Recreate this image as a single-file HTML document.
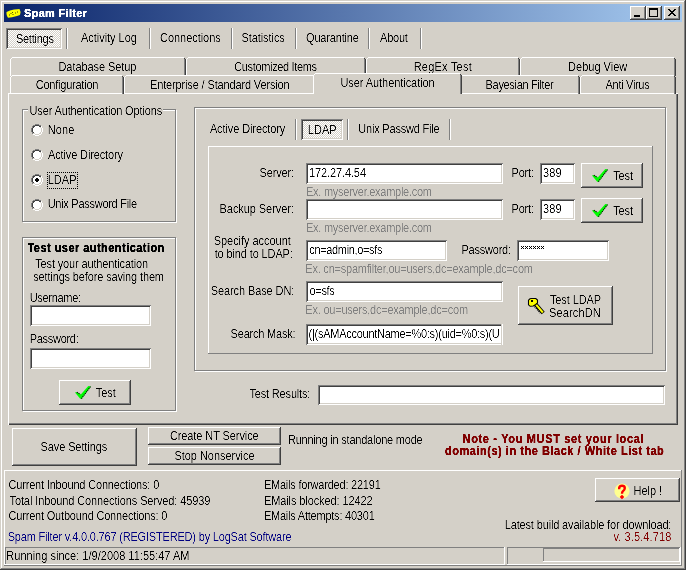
<!DOCTYPE html>
<html><head><meta charset="utf-8"><style>
html,body{margin:0;padding:0;width:686px;height:570px;overflow:hidden;background:#d4d0c8}
body{position:relative;font-family:"Liberation Sans", sans-serif;font-size:11px;color:#000}
body div, body svg{position:absolute}
.t{white-space:pre;line-height:13px;font-size:11px;filter:url(#crisp)}
</style></head><body>
<svg width="0" height="0" style="position:absolute;left:0;top:0"><filter id="crisp" x="-5%" y="-30%" width="110%" height="160%"><feComponentTransfer><feFuncA type="linear" slope="2" intercept="-0.6"/></feComponentTransfer></filter><filter id="crispb" x="-5%" y="-30%" width="110%" height="160%"><feComponentTransfer><feFuncA type="linear" slope="2.5" intercept="-0.2"/></feComponentTransfer></filter></svg>
<div style="left:0px;top:0px;width:686px;height:1px;background:#d4d0c8"></div>
<div style="left:0px;top:0px;width:1px;height:570px;background:#d4d0c8"></div>
<div style="left:1px;top:1px;width:684px;height:1px;background:#fff"></div>
<div style="left:1px;top:1px;width:1px;height:568px;background:#fff"></div>
<div style="left:0px;top:569px;width:686px;height:1px;background:#404040"></div>
<div style="left:685px;top:0px;width:1px;height:570px;background:#404040"></div>
<div style="left:1px;top:568px;width:684px;height:1px;background:#808080"></div>
<div style="left:684px;top:1px;width:1px;height:568px;background:#808080"></div>
<div style="left:4px;top:4px;width:678px;height:18px;background:linear-gradient(to right,#0a246a,#a6caf0)"></div>
<svg width="16" height="11" viewBox="0 0 16 11" style="left:6px;top:8px"><path d="M0.5 4 L4 2.5 L8 1.5 L11 1.3 L13.5 1 L14.6 4 L14 7 L11 8 L6 9.2 L2 9.8 L1 8 L0.5 6 Z" fill="#ffff00"/><path d="M6 4.5 h1 M4.5 5.5 h1 M6.5 6.5 h1 M9 5 h1 M11 4 h1 M3 7 h1" stroke="#505000" stroke-width="1"/></svg>
<div class="t" style="left:24.00px;top:7.00px;letter-spacing:0.300px;filter:url(#crispb);color:#fff;font-weight:bold">Spam Filter</div>
<div style="left:630px;top:6px;width:16px;height:14px;background:#d4d0c8;box-shadow:inset -1px -1px #404040,inset 1px 1px #fff,inset -2px -2px #808080"></div>
<div style="left:646px;top:6px;width:16px;height:14px;background:#d4d0c8;box-shadow:inset -1px -1px #404040,inset 1px 1px #fff,inset -2px -2px #808080"></div>
<div style="left:664px;top:6px;width:16px;height:14px;background:#d4d0c8;box-shadow:inset -1px -1px #404040,inset 1px 1px #fff,inset -2px -2px #808080"></div>
<div style="left:634px;top:15px;width:6px;height:2px;background:#000"></div>
<div style="left:649px;top:8px;width:9px;height:9px;box-shadow:inset 0 2px #000,inset 1px 0 #000,inset -1px 0 #000,inset 0 -1px #000"></div>
<svg width="8" height="7" viewBox="0 0 8 7" shape-rendering="crispEdges" style="left:668px;top:9px"><path d="M0 0h1v1h-1zM1 0h1v1h-1zM6 0h1v1h-1zM7 0h1v1h-1zM1 1h1v1h-1zM2 1h1v1h-1zM5 1h1v1h-1zM6 1h1v1h-1zM2 2h1v1h-1zM3 2h1v1h-1zM4 2h1v1h-1zM5 2h1v1h-1zM3 3h1v1h-1zM4 3h1v1h-1zM2 4h1v1h-1zM3 4h1v1h-1zM4 4h1v1h-1zM5 4h1v1h-1zM1 5h1v1h-1zM2 5h1v1h-1zM5 5h1v1h-1zM6 5h1v1h-1zM0 6h1v1h-1zM1 6h1v1h-1zM6 6h1v1h-1zM7 6h1v1h-1z" fill="#000"/></svg>
<div style="left:6px;top:28px;width:56px;height:21px;background-color:#fff;background-image:repeating-conic-gradient(#d4d0c8 0 25%,#fff 0 50%);background-size:2px 2px;box-shadow:inset 1px 1px #808080,inset -1px -1px #fff,inset 2px 2px #404040,inset -2px -2px #d4d0c8"></div>
<div class="t" style="left:15.90px;top:33.00px;letter-spacing:-0.243px;transform:scaleY(1.125);transform-origin:0 10px;">Settings</div>
<div style="left:66px;top:28px;width:1px;height:21px;background:#808080"></div>
<div style="left:67px;top:28px;width:1px;height:21px;background:#fff"></div>
<div class="t" style="left:81.00px;top:32.20px;letter-spacing:-0.036px;transform:scaleY(1.125);transform-origin:0 10px;">Activity Log</div>
<div style="left:149px;top:28px;width:1px;height:21px;background:#808080"></div>
<div style="left:150px;top:28px;width:1px;height:21px;background:#fff"></div>
<div class="t" style="left:160.00px;top:32.20px;letter-spacing:-0.040px;transform:scaleY(1.125);transform-origin:0 10px;">Connections</div>
<div style="left:231px;top:28px;width:1px;height:21px;background:#808080"></div>
<div style="left:232px;top:28px;width:1px;height:21px;background:#fff"></div>
<div class="t" style="left:241.50px;top:32.20px;letter-spacing:-0.078px;transform:scaleY(1.125);transform-origin:0 10px;">Statistics</div>
<div style="left:295px;top:28px;width:1px;height:21px;background:#808080"></div>
<div style="left:296px;top:28px;width:1px;height:21px;background:#fff"></div>
<div class="t" style="left:306.00px;top:32.20px;letter-spacing:-0.167px;transform:scaleY(1.125);transform-origin:0 10px;">Quarantine</div>
<div style="left:368px;top:28px;width:1px;height:21px;background:#808080"></div>
<div style="left:369px;top:28px;width:1px;height:21px;background:#fff"></div>
<div class="t" style="left:380.10px;top:32.20px;letter-spacing:-0.250px;transform:scaleY(1.125);transform-origin:0 10px;">About</div>
<div style="left:420px;top:28px;width:1px;height:21px;background:#808080"></div>
<div style="left:421px;top:28px;width:1px;height:21px;background:#fff"></div>
<div style="left:12px;top:57px;width:172px;height:1px;background:#fff"></div>
<div style="left:10px;top:59px;width:1px;height:17px;background:#fff"></div>
<div style="left:11px;top:58px;width:1px;height:1px;background:#fff"></div>
<div style="left:184px;top:58px;width:1px;height:18px;background:#808080"></div>
<div style="left:185px;top:59px;width:1px;height:17px;background:#404040"></div>
<div style="left:184px;top:58px;width:1px;height:1px;background:#404040"></div>
<div class="t" style="left:58.50px;top:61.00px;letter-spacing:-0.077px;transform:scaleY(1.125);transform-origin:0 10px;">Database Setup</div>
<div style="left:188px;top:57px;width:176px;height:1px;background:#fff"></div>
<div style="left:186px;top:59px;width:1px;height:17px;background:#fff"></div>
<div style="left:187px;top:58px;width:1px;height:1px;background:#fff"></div>
<div style="left:364px;top:58px;width:1px;height:18px;background:#808080"></div>
<div style="left:365px;top:59px;width:1px;height:17px;background:#404040"></div>
<div style="left:364px;top:58px;width:1px;height:1px;background:#404040"></div>
<div class="t" style="left:234.20px;top:61.00px;letter-spacing:-0.340px;transform:scaleY(1.125);transform-origin:0 10px;">Customized Items</div>
<div style="left:368px;top:57px;width:150px;height:1px;background:#fff"></div>
<div style="left:366px;top:59px;width:1px;height:17px;background:#fff"></div>
<div style="left:367px;top:58px;width:1px;height:1px;background:#fff"></div>
<div style="left:518px;top:58px;width:1px;height:18px;background:#808080"></div>
<div style="left:519px;top:59px;width:1px;height:17px;background:#404040"></div>
<div style="left:518px;top:58px;width:1px;height:1px;background:#404040"></div>
<div class="t" style="left:413.70px;top:61.00px;letter-spacing:0.222px;transform:scaleY(1.125);transform-origin:0 10px;">RegEx Test</div>
<div style="left:522px;top:57px;width:152px;height:1px;background:#fff"></div>
<div style="left:520px;top:59px;width:1px;height:17px;background:#fff"></div>
<div style="left:521px;top:58px;width:1px;height:1px;background:#fff"></div>
<div style="left:674px;top:58px;width:1px;height:18px;background:#808080"></div>
<div style="left:675px;top:59px;width:1px;height:17px;background:#404040"></div>
<div style="left:674px;top:58px;width:1px;height:1px;background:#404040"></div>
<div class="t" style="left:568.10px;top:61.00px;letter-spacing:0.000px;transform:scaleY(1.125);transform-origin:0 10px;">Debug View</div>
<div style="left:8px;top:93px;width:670px;height:332px;box-shadow:inset 1px 1px #fff,inset -1px -1px #404040,inset -2px -2px #808080"></div>
<div style="left:12px;top:75px;width:110px;height:1px;background:#fff"></div>
<div style="left:10px;top:77px;width:1px;height:17px;background:#fff"></div>
<div style="left:11px;top:76px;width:1px;height:1px;background:#fff"></div>
<div style="left:122px;top:76px;width:1px;height:18px;background:#808080"></div>
<div style="left:123px;top:77px;width:1px;height:17px;background:#404040"></div>
<div style="left:122px;top:76px;width:1px;height:1px;background:#404040"></div>
<div class="t" style="left:35.70px;top:78.50px;letter-spacing:-0.225px;transform:scaleY(1.125);transform-origin:0 10px;">Configuration</div>
<div style="left:126px;top:75px;width:188px;height:1px;background:#fff"></div>
<div style="left:124px;top:77px;width:1px;height:17px;background:#fff"></div>
<div style="left:125px;top:76px;width:1px;height:1px;background:#fff"></div>
<div style="left:314px;top:76px;width:1px;height:18px;background:#808080"></div>
<div style="left:315px;top:77px;width:1px;height:17px;background:#404040"></div>
<div style="left:314px;top:76px;width:1px;height:1px;background:#404040"></div>
<div class="t" style="left:150.00px;top:78.50px;letter-spacing:-0.143px;transform:scaleY(1.125);transform-origin:0 10px;">Enterprise / Standard Version</div>
<div style="left:462px;top:75px;width:116px;height:1px;background:#fff"></div>
<div style="left:460px;top:77px;width:1px;height:17px;background:#fff"></div>
<div style="left:461px;top:76px;width:1px;height:1px;background:#fff"></div>
<div style="left:578px;top:76px;width:1px;height:18px;background:#808080"></div>
<div style="left:579px;top:77px;width:1px;height:17px;background:#404040"></div>
<div style="left:578px;top:76px;width:1px;height:1px;background:#404040"></div>
<div class="t" style="left:485.60px;top:78.50px;letter-spacing:-0.329px;transform:scaleY(1.125);transform-origin:0 10px;">Bayesian Filter</div>
<div style="left:582px;top:75px;width:92px;height:1px;background:#fff"></div>
<div style="left:580px;top:77px;width:1px;height:17px;background:#fff"></div>
<div style="left:581px;top:76px;width:1px;height:1px;background:#fff"></div>
<div style="left:674px;top:76px;width:1px;height:18px;background:#808080"></div>
<div style="left:675px;top:77px;width:1px;height:17px;background:#404040"></div>
<div style="left:674px;top:76px;width:1px;height:1px;background:#404040"></div>
<div class="t" style="left:605.60px;top:78.50px;letter-spacing:-0.311px;transform:scaleY(1.125);transform-origin:0 10px;">Anti Virus</div>
<div style="left:313px;top:73px;width:149px;height:22px;background:#d4d0c8"></div>
<div style="left:315px;top:73px;width:145px;height:1px;background:#fff"></div>
<div style="left:313px;top:75px;width:1px;height:19px;background:#fff"></div>
<div style="left:314px;top:74px;width:1px;height:1px;background:#fff"></div>
<div style="left:460px;top:74px;width:1px;height:20px;background:#808080"></div>
<div style="left:461px;top:75px;width:1px;height:19px;background:#404040"></div>
<div style="left:460px;top:74px;width:1px;height:1px;background:#404040"></div>
<div class="t" style="left:340.40px;top:76.80px;letter-spacing:-0.061px;transform:scaleY(1.125);transform-origin:0 10px;">User Authentication</div>
<div style="left:23px;top:110px;width:154px;height:113px;border:1px solid #fff;box-sizing:border-box"></div>
<div style="left:22px;top:109px;width:154px;height:113px;border:1px solid #808080;box-sizing:border-box"></div>
<div style="left:28px;top:104px;width:135px;height:13px;background:#d4d0c8"></div>
<div class="t" style="left:29.50px;top:104.70px;letter-spacing:-0.142px;transform:scaleY(1.125);transform-origin:0 10px;">User Authentication Options</div>
<svg width="12" height="12" viewBox="0 0 12 12" shape-rendering="crispEdges" style="left:31px;top:124px"><path d="M4 0h1v1h-1zM5 0h1v1h-1zM6 0h1v1h-1zM7 0h1v1h-1zM2 1h1v1h-1zM3 1h1v1h-1zM8 1h1v1h-1zM9 1h1v1h-1zM1 2h1v1h-1zM1 3h1v1h-1zM0 4h1v1h-1zM0 5h1v1h-1zM0 6h1v1h-1zM0 7h1v1h-1zM1 8h1v1h-1zM1 9h1v1h-1z" fill="#808080"/><path d="M4 1h1v1h-1zM5 1h1v1h-1zM6 1h1v1h-1zM7 1h1v1h-1zM2 2h1v1h-1zM3 2h1v1h-1zM8 2h1v1h-1zM9 2h1v1h-1zM2 3h1v1h-1zM1 4h1v1h-1zM1 5h1v1h-1zM1 6h1v1h-1zM1 7h1v1h-1zM2 8h1v1h-1z" fill="#404040"/><path d="M4 2h1v1h-1zM5 2h1v1h-1zM6 2h1v1h-1zM7 2h1v1h-1zM10 2h1v1h-1zM3 3h1v1h-1zM4 3h1v1h-1zM5 3h1v1h-1zM6 3h1v1h-1zM7 3h1v1h-1zM8 3h1v1h-1zM10 3h1v1h-1zM2 4h1v1h-1zM3 4h1v1h-1zM4 4h1v1h-1zM5 4h1v1h-1zM6 4h1v1h-1zM7 4h1v1h-1zM8 4h1v1h-1zM9 4h1v1h-1zM11 4h1v1h-1zM2 5h1v1h-1zM3 5h1v1h-1zM4 5h1v1h-1zM5 5h1v1h-1zM6 5h1v1h-1zM7 5h1v1h-1zM8 5h1v1h-1zM9 5h1v1h-1zM11 5h1v1h-1zM2 6h1v1h-1zM3 6h1v1h-1zM4 6h1v1h-1zM5 6h1v1h-1zM6 6h1v1h-1zM7 6h1v1h-1zM8 6h1v1h-1zM9 6h1v1h-1zM11 6h1v1h-1zM2 7h1v1h-1zM3 7h1v1h-1zM4 7h1v1h-1zM5 7h1v1h-1zM6 7h1v1h-1zM7 7h1v1h-1zM8 7h1v1h-1zM9 7h1v1h-1zM11 7h1v1h-1zM3 8h1v1h-1zM4 8h1v1h-1zM5 8h1v1h-1zM6 8h1v1h-1zM7 8h1v1h-1zM8 8h1v1h-1zM10 8h1v1h-1zM4 9h1v1h-1zM5 9h1v1h-1zM6 9h1v1h-1zM7 9h1v1h-1zM10 9h1v1h-1zM2 10h1v1h-1zM3 10h1v1h-1zM8 10h1v1h-1zM9 10h1v1h-1zM4 11h1v1h-1zM5 11h1v1h-1zM6 11h1v1h-1zM7 11h1v1h-1z" fill="#ffffff"/><path d="M9 3h1v1h-1zM10 4h1v1h-1zM10 5h1v1h-1zM10 6h1v1h-1zM10 7h1v1h-1zM9 8h1v1h-1zM2 9h1v1h-1zM3 9h1v1h-1zM8 9h1v1h-1zM9 9h1v1h-1zM4 10h1v1h-1zM5 10h1v1h-1zM6 10h1v1h-1zM7 10h1v1h-1z" fill="#d4d0c8"/></svg>
<div class="t" style="left:47.70px;top:123.70px;letter-spacing:0.167px;transform:scaleY(1.125);transform-origin:0 10px;">None</div>
<svg width="12" height="12" viewBox="0 0 12 12" shape-rendering="crispEdges" style="left:31px;top:149px"><path d="M4 0h1v1h-1zM5 0h1v1h-1zM6 0h1v1h-1zM7 0h1v1h-1zM2 1h1v1h-1zM3 1h1v1h-1zM8 1h1v1h-1zM9 1h1v1h-1zM1 2h1v1h-1zM1 3h1v1h-1zM0 4h1v1h-1zM0 5h1v1h-1zM0 6h1v1h-1zM0 7h1v1h-1zM1 8h1v1h-1zM1 9h1v1h-1z" fill="#808080"/><path d="M4 1h1v1h-1zM5 1h1v1h-1zM6 1h1v1h-1zM7 1h1v1h-1zM2 2h1v1h-1zM3 2h1v1h-1zM8 2h1v1h-1zM9 2h1v1h-1zM2 3h1v1h-1zM1 4h1v1h-1zM1 5h1v1h-1zM1 6h1v1h-1zM1 7h1v1h-1zM2 8h1v1h-1z" fill="#404040"/><path d="M4 2h1v1h-1zM5 2h1v1h-1zM6 2h1v1h-1zM7 2h1v1h-1zM10 2h1v1h-1zM3 3h1v1h-1zM4 3h1v1h-1zM5 3h1v1h-1zM6 3h1v1h-1zM7 3h1v1h-1zM8 3h1v1h-1zM10 3h1v1h-1zM2 4h1v1h-1zM3 4h1v1h-1zM4 4h1v1h-1zM5 4h1v1h-1zM6 4h1v1h-1zM7 4h1v1h-1zM8 4h1v1h-1zM9 4h1v1h-1zM11 4h1v1h-1zM2 5h1v1h-1zM3 5h1v1h-1zM4 5h1v1h-1zM5 5h1v1h-1zM6 5h1v1h-1zM7 5h1v1h-1zM8 5h1v1h-1zM9 5h1v1h-1zM11 5h1v1h-1zM2 6h1v1h-1zM3 6h1v1h-1zM4 6h1v1h-1zM5 6h1v1h-1zM6 6h1v1h-1zM7 6h1v1h-1zM8 6h1v1h-1zM9 6h1v1h-1zM11 6h1v1h-1zM2 7h1v1h-1zM3 7h1v1h-1zM4 7h1v1h-1zM5 7h1v1h-1zM6 7h1v1h-1zM7 7h1v1h-1zM8 7h1v1h-1zM9 7h1v1h-1zM11 7h1v1h-1zM3 8h1v1h-1zM4 8h1v1h-1zM5 8h1v1h-1zM6 8h1v1h-1zM7 8h1v1h-1zM8 8h1v1h-1zM10 8h1v1h-1zM4 9h1v1h-1zM5 9h1v1h-1zM6 9h1v1h-1zM7 9h1v1h-1zM10 9h1v1h-1zM2 10h1v1h-1zM3 10h1v1h-1zM8 10h1v1h-1zM9 10h1v1h-1zM4 11h1v1h-1zM5 11h1v1h-1zM6 11h1v1h-1zM7 11h1v1h-1z" fill="#ffffff"/><path d="M9 3h1v1h-1zM10 4h1v1h-1zM10 5h1v1h-1zM10 6h1v1h-1zM10 7h1v1h-1zM9 8h1v1h-1zM2 9h1v1h-1zM3 9h1v1h-1zM8 9h1v1h-1zM9 9h1v1h-1zM4 10h1v1h-1zM5 10h1v1h-1zM6 10h1v1h-1zM7 10h1v1h-1z" fill="#d4d0c8"/></svg>
<div class="t" style="left:48.00px;top:148.70px;letter-spacing:-0.133px;transform:scaleY(1.125);transform-origin:0 10px;">Active Directory</div>
<svg width="12" height="12" viewBox="0 0 12 12" shape-rendering="crispEdges" style="left:31px;top:174px"><path d="M4 0h1v1h-1zM5 0h1v1h-1zM6 0h1v1h-1zM7 0h1v1h-1zM2 1h1v1h-1zM3 1h1v1h-1zM8 1h1v1h-1zM9 1h1v1h-1zM1 2h1v1h-1zM1 3h1v1h-1zM0 4h1v1h-1zM0 5h1v1h-1zM0 6h1v1h-1zM0 7h1v1h-1zM1 8h1v1h-1zM1 9h1v1h-1z" fill="#808080"/><path d="M4 1h1v1h-1zM5 1h1v1h-1zM6 1h1v1h-1zM7 1h1v1h-1zM2 2h1v1h-1zM3 2h1v1h-1zM8 2h1v1h-1zM9 2h1v1h-1zM2 3h1v1h-1zM1 4h1v1h-1zM1 5h1v1h-1zM1 6h1v1h-1zM1 7h1v1h-1zM2 8h1v1h-1z" fill="#404040"/><path d="M4 2h1v1h-1zM5 2h1v1h-1zM6 2h1v1h-1zM7 2h1v1h-1zM10 2h1v1h-1zM3 3h1v1h-1zM4 3h1v1h-1zM5 3h1v1h-1zM6 3h1v1h-1zM7 3h1v1h-1zM8 3h1v1h-1zM10 3h1v1h-1zM2 4h1v1h-1zM3 4h1v1h-1zM4 4h1v1h-1zM7 4h1v1h-1zM8 4h1v1h-1zM9 4h1v1h-1zM11 4h1v1h-1zM2 5h1v1h-1zM3 5h1v1h-1zM8 5h1v1h-1zM9 5h1v1h-1zM11 5h1v1h-1zM2 6h1v1h-1zM3 6h1v1h-1zM8 6h1v1h-1zM9 6h1v1h-1zM11 6h1v1h-1zM2 7h1v1h-1zM3 7h1v1h-1zM4 7h1v1h-1zM7 7h1v1h-1zM8 7h1v1h-1zM9 7h1v1h-1zM11 7h1v1h-1zM3 8h1v1h-1zM4 8h1v1h-1zM5 8h1v1h-1zM6 8h1v1h-1zM7 8h1v1h-1zM8 8h1v1h-1zM10 8h1v1h-1zM4 9h1v1h-1zM5 9h1v1h-1zM6 9h1v1h-1zM7 9h1v1h-1zM10 9h1v1h-1zM2 10h1v1h-1zM3 10h1v1h-1zM8 10h1v1h-1zM9 10h1v1h-1zM4 11h1v1h-1zM5 11h1v1h-1zM6 11h1v1h-1zM7 11h1v1h-1z" fill="#ffffff"/><path d="M9 3h1v1h-1zM10 4h1v1h-1zM10 5h1v1h-1zM10 6h1v1h-1zM10 7h1v1h-1zM9 8h1v1h-1zM2 9h1v1h-1zM3 9h1v1h-1zM8 9h1v1h-1zM9 9h1v1h-1zM4 10h1v1h-1zM5 10h1v1h-1zM6 10h1v1h-1zM7 10h1v1h-1z" fill="#d4d0c8"/><path d="M5 4h1v1h-1zM6 4h1v1h-1zM4 5h1v1h-1zM5 5h1v1h-1zM6 5h1v1h-1zM7 5h1v1h-1zM4 6h1v1h-1zM5 6h1v1h-1zM6 6h1v1h-1zM7 6h1v1h-1zM5 7h1v1h-1zM6 7h1v1h-1z" fill="#000"/></svg>
<div class="t" style="left:47.70px;top:173.80px;letter-spacing:0.033px;transform:scaleY(1.125);transform-origin:0 10px;">LDAP</div>
<div style="left:47px;top:172px;width:31px;height:17px;border:1px dotted #000;box-sizing:border-box"></div>
<svg width="12" height="12" viewBox="0 0 12 12" shape-rendering="crispEdges" style="left:31px;top:199px"><path d="M4 0h1v1h-1zM5 0h1v1h-1zM6 0h1v1h-1zM7 0h1v1h-1zM2 1h1v1h-1zM3 1h1v1h-1zM8 1h1v1h-1zM9 1h1v1h-1zM1 2h1v1h-1zM1 3h1v1h-1zM0 4h1v1h-1zM0 5h1v1h-1zM0 6h1v1h-1zM0 7h1v1h-1zM1 8h1v1h-1zM1 9h1v1h-1z" fill="#808080"/><path d="M4 1h1v1h-1zM5 1h1v1h-1zM6 1h1v1h-1zM7 1h1v1h-1zM2 2h1v1h-1zM3 2h1v1h-1zM8 2h1v1h-1zM9 2h1v1h-1zM2 3h1v1h-1zM1 4h1v1h-1zM1 5h1v1h-1zM1 6h1v1h-1zM1 7h1v1h-1zM2 8h1v1h-1z" fill="#404040"/><path d="M4 2h1v1h-1zM5 2h1v1h-1zM6 2h1v1h-1zM7 2h1v1h-1zM10 2h1v1h-1zM3 3h1v1h-1zM4 3h1v1h-1zM5 3h1v1h-1zM6 3h1v1h-1zM7 3h1v1h-1zM8 3h1v1h-1zM10 3h1v1h-1zM2 4h1v1h-1zM3 4h1v1h-1zM4 4h1v1h-1zM5 4h1v1h-1zM6 4h1v1h-1zM7 4h1v1h-1zM8 4h1v1h-1zM9 4h1v1h-1zM11 4h1v1h-1zM2 5h1v1h-1zM3 5h1v1h-1zM4 5h1v1h-1zM5 5h1v1h-1zM6 5h1v1h-1zM7 5h1v1h-1zM8 5h1v1h-1zM9 5h1v1h-1zM11 5h1v1h-1zM2 6h1v1h-1zM3 6h1v1h-1zM4 6h1v1h-1zM5 6h1v1h-1zM6 6h1v1h-1zM7 6h1v1h-1zM8 6h1v1h-1zM9 6h1v1h-1zM11 6h1v1h-1zM2 7h1v1h-1zM3 7h1v1h-1zM4 7h1v1h-1zM5 7h1v1h-1zM6 7h1v1h-1zM7 7h1v1h-1zM8 7h1v1h-1zM9 7h1v1h-1zM11 7h1v1h-1zM3 8h1v1h-1zM4 8h1v1h-1zM5 8h1v1h-1zM6 8h1v1h-1zM7 8h1v1h-1zM8 8h1v1h-1zM10 8h1v1h-1zM4 9h1v1h-1zM5 9h1v1h-1zM6 9h1v1h-1zM7 9h1v1h-1zM10 9h1v1h-1zM2 10h1v1h-1zM3 10h1v1h-1zM8 10h1v1h-1zM9 10h1v1h-1zM4 11h1v1h-1zM5 11h1v1h-1zM6 11h1v1h-1zM7 11h1v1h-1z" fill="#ffffff"/><path d="M9 3h1v1h-1zM10 4h1v1h-1zM10 5h1v1h-1zM10 6h1v1h-1zM10 7h1v1h-1zM9 8h1v1h-1zM2 9h1v1h-1zM3 9h1v1h-1zM8 9h1v1h-1zM9 9h1v1h-1zM4 10h1v1h-1zM5 10h1v1h-1zM6 10h1v1h-1zM7 10h1v1h-1z" fill="#d4d0c8"/></svg>
<div class="t" style="left:47.70px;top:198.30px;letter-spacing:-0.276px;transform:scaleY(1.125);transform-origin:0 10px;">Unix Password File</div>
<div style="left:23px;top:238px;width:154px;height:174px;border:1px solid #fff;box-sizing:border-box"></div>
<div style="left:22px;top:237px;width:154px;height:174px;border:1px solid #808080;box-sizing:border-box"></div>
<div class="t" style="left:27.50px;top:242.00px;letter-spacing:0.457px;transform:scaleY(1.125);transform-origin:0 10px;filter:url(#crispb);font-weight:bold">Test user authentication</div>
<div class="t" style="left:35.20px;top:257.80px;letter-spacing:-0.139px;transform:scaleY(1.125);transform-origin:0 10px;">Test your authentication</div>
<div class="t" style="left:33.20px;top:270.80px;letter-spacing:-0.142px;transform:scaleY(1.125);transform-origin:0 10px;">settings before saving them</div>
<div class="t" style="left:29.70px;top:292.00px;letter-spacing:-0.300px;transform:scaleY(1.125);transform-origin:0 10px;">Username:</div>
<div style="left:30px;top:305px;width:121px;height:21px;background:#fff;box-shadow:inset 1px 1px #808080,inset -1px -1px #fff,inset 2px 2px #404040,inset -2px -2px #d4d0c8"></div>
<div class="t" style="left:29.70px;top:332.60px;letter-spacing:-0.287px;transform:scaleY(1.125);transform-origin:0 10px;">Password:</div>
<div style="left:30px;top:348px;width:121px;height:21px;background:#fff;box-shadow:inset 1px 1px #808080,inset -1px -1px #fff,inset 2px 2px #404040,inset -2px -2px #d4d0c8"></div>
<div style="left:59px;top:380px;width:72px;height:25px;background:#d4d0c8;box-shadow:inset -1px -1px #404040,inset 1px 1px #fff,inset -2px -2px #808080"></div>
<svg width="19" height="16" viewBox="0 0 19 16" style="left:74px;top:385px"><path d="M1.1 7.3 L3.5 7.3 L6.8 9.4 L14.3 1.05 L16.9 1.4 L7.7 13.8 L6.2 13.8 L1.4 8.1 Z" fill="#00ff00"/><path d="M16.5 1.6 L7.4 13.6 M2.8 7.2 L6.4 9.2" stroke="#000" stroke-width="1.1" stroke-dasharray="1.1 0.9" fill="none"/></svg>
<div class="t" style="left:95.80px;top:387.00px;letter-spacing:-0.067px;transform:scaleY(1.125);transform-origin:0 10px;">Test</div>
<div style="left:195px;top:108px;width:472px;height:264px;border:1px solid #fff;box-sizing:border-box"></div>
<div style="left:194px;top:107px;width:472px;height:264px;border:1px solid #808080;box-sizing:border-box"></div>
<div class="t" style="left:209.90px;top:123.00px;letter-spacing:-0.107px;transform:scaleY(1.125);transform-origin:0 10px;">Active Directory</div>
<div style="left:295px;top:119px;width:1px;height:21px;background:#808080"></div>
<div style="left:296px;top:119px;width:1px;height:21px;background:#fff"></div>
<div style="left:301px;top:119px;width:42px;height:21px;background-color:#fff;background-image:repeating-conic-gradient(#d4d0c8 0 25%,#fff 0 50%);background-size:2px 2px;box-shadow:inset 1px 1px #808080,inset -1px -1px #fff,inset 2px 2px #404040,inset -2px -2px #d4d0c8"></div>
<div class="t" style="left:307.80px;top:124.00px;letter-spacing:0.033px;transform:scaleY(1.125);transform-origin:0 10px;">LDAP</div>
<div style="left:347px;top:119px;width:1px;height:21px;background:#808080"></div>
<div style="left:348px;top:119px;width:1px;height:21px;background:#fff"></div>
<div class="t" style="left:358.20px;top:123.00px;letter-spacing:-0.187px;transform:scaleY(1.125);transform-origin:0 10px;">Unix Passwd File</div>
<div style="left:449px;top:119px;width:1px;height:21px;background:#808080"></div>
<div style="left:450px;top:119px;width:1px;height:21px;background:#fff"></div>
<div style="left:208px;top:146px;width:445px;height:208px;box-shadow:inset -1px -1px #808080,inset 1px 1px #fff"></div>
<div class="t" style="left:259.50px;top:166.90px;letter-spacing:-0.133px;transform:scaleY(1.125);transform-origin:0 10px;">Server:</div>
<div style="left:306px;top:163px;width:197px;height:21px;background:#fff;box-shadow:inset 1px 1px #808080,inset -1px -1px #fff,inset 2px 2px #404040,inset -2px -2px #d4d0c8"></div>
<div class="t" style="left:308.90px;top:166.90px;letter-spacing:-0.100px;transform:scaleY(1.125);transform-origin:0 10px;">172.27.4.54</div>
<div class="t" style="left:511.60px;top:166.90px;letter-spacing:-0.225px;transform:scaleY(1.125);transform-origin:0 10px;">Port:</div>
<div style="left:540px;top:163px;width:35px;height:21px;background:#fff;box-shadow:inset 1px 1px #808080,inset -1px -1px #fff,inset 2px 2px #404040,inset -2px -2px #d4d0c8"></div>
<div class="t" style="left:542.90px;top:166.90px;letter-spacing:0.150px;transform:scaleY(1.125);transform-origin:0 10px;">389</div>
<div style="left:581px;top:163px;width:62px;height:25px;background:#d4d0c8;box-shadow:inset -1px -1px #404040,inset 1px 1px #fff,inset -2px -2px #808080"></div>
<svg width="19" height="16" viewBox="0 0 19 16" style="left:591px;top:168px"><path d="M1.1 7.3 L3.5 7.3 L6.8 9.4 L14.3 1.05 L16.9 1.4 L7.7 13.8 L6.2 13.8 L1.4 8.1 Z" fill="#00ff00"/><path d="M16.5 1.6 L7.4 13.6 M2.8 7.2 L6.4 9.2" stroke="#000" stroke-width="1.1" stroke-dasharray="1.1 0.9" fill="none"/></svg>
<div class="t" style="left:613.20px;top:169.70px;letter-spacing:-0.100px;transform:scaleY(1.125);transform-origin:0 10px;">Test</div>
<div class="t" style="left:306.00px;top:185.80px;letter-spacing:-0.261px;transform:scaleY(1.125);transform-origin:0 10px;color:#808080">Ex. myserver.example.com</div>
<div class="t" style="left:219.60px;top:202.70px;letter-spacing:-0.069px;transform:scaleY(1.125);transform-origin:0 10px;">Backup Server:</div>
<div style="left:306px;top:199px;width:197px;height:21px;background:#fff;box-shadow:inset 1px 1px #808080,inset -1px -1px #fff,inset 2px 2px #404040,inset -2px -2px #d4d0c8"></div>
<div class="t" style="left:511.60px;top:202.90px;letter-spacing:-0.225px;transform:scaleY(1.125);transform-origin:0 10px;">Port:</div>
<div style="left:540px;top:199px;width:35px;height:21px;background:#fff;box-shadow:inset 1px 1px #808080,inset -1px -1px #fff,inset 2px 2px #404040,inset -2px -2px #d4d0c8"></div>
<div class="t" style="left:542.90px;top:202.90px;letter-spacing:0.150px;transform:scaleY(1.125);transform-origin:0 10px;">389</div>
<div style="left:581px;top:198px;width:62px;height:25px;background:#d4d0c8;box-shadow:inset -1px -1px #404040,inset 1px 1px #fff,inset -2px -2px #808080"></div>
<svg width="19" height="16" viewBox="0 0 19 16" style="left:591px;top:203px"><path d="M1.1 7.3 L3.5 7.3 L6.8 9.4 L14.3 1.05 L16.9 1.4 L7.7 13.8 L6.2 13.8 L1.4 8.1 Z" fill="#00ff00"/><path d="M16.5 1.6 L7.4 13.6 M2.8 7.2 L6.4 9.2" stroke="#000" stroke-width="1.1" stroke-dasharray="1.1 0.9" fill="none"/></svg>
<div class="t" style="left:613.20px;top:205.00px;letter-spacing:-0.100px;transform:scaleY(1.125);transform-origin:0 10px;">Test</div>
<div class="t" style="left:306.00px;top:222.00px;letter-spacing:-0.261px;transform:scaleY(1.125);transform-origin:0 10px;color:#808080">Ex. myserver.example.com</div>
<div class="t" style="left:213.70px;top:235.20px;letter-spacing:-0.036px;transform:scaleY(1.125);transform-origin:0 10px;">Specify account</div>
<div class="t" style="left:214.70px;top:248.00px;letter-spacing:-0.127px;transform:scaleY(1.125);transform-origin:0 10px;">to bind to LDAP:</div>
<div style="left:306px;top:240px;width:141px;height:21px;background:#fff;box-shadow:inset 1px 1px #808080,inset -1px -1px #fff,inset 2px 2px #404040,inset -2px -2px #d4d0c8"></div>
<div class="t" style="left:309.30px;top:243.70px;letter-spacing:-0.346px;transform:scaleY(1.125);transform-origin:0 10px;">cn=admin,o=sfs</div>
<div class="t" style="left:461.40px;top:244.30px;letter-spacing:-0.212px;transform:scaleY(1.125);transform-origin:0 10px;">Password:</div>
<div style="left:517px;top:240px;width:92px;height:21px;background:#fff;box-shadow:inset 1px 1px #808080,inset -1px -1px #fff,inset 2px 2px #404040,inset -2px -2px #d4d0c8"></div>
<svg width="24" height="3" viewBox="0 0 24 3" shape-rendering="crispEdges" style="left:521px;top:246px"><path d="M0 0h1v1h-1zM2 0h1v1h-1zM1 1h1v1h-1zM0 2h1v1h-1zM2 2h1v1h-1zM4 0h1v1h-1zM6 0h1v1h-1zM5 1h1v1h-1zM4 2h1v1h-1zM6 2h1v1h-1zM8 0h1v1h-1zM10 0h1v1h-1zM9 1h1v1h-1zM8 2h1v1h-1zM10 2h1v1h-1zM12 0h1v1h-1zM14 0h1v1h-1zM13 1h1v1h-1zM12 2h1v1h-1zM14 2h1v1h-1zM16 0h1v1h-1zM18 0h1v1h-1zM17 1h1v1h-1zM16 2h1v1h-1zM18 2h1v1h-1zM20 0h1v1h-1zM22 0h1v1h-1zM21 1h1v1h-1zM20 2h1v1h-1zM22 2h1v1h-1z" fill="#000"/></svg>
<div class="t" style="left:305.30px;top:262.50px;letter-spacing:-0.223px;transform:scaleY(1.125);transform-origin:0 10px;color:#808080">Ex. cn=spamfilter,ou=users,dc=example,dc=com</div>
<div class="t" style="left:210.80px;top:284.80px;letter-spacing:-0.107px;transform:scaleY(1.125);transform-origin:0 10px;">Search Base DN:</div>
<div style="left:306px;top:281px;width:197px;height:21px;background:#fff;box-shadow:inset 1px 1px #808080,inset -1px -1px #fff,inset 2px 2px #404040,inset -2px -2px #d4d0c8"></div>
<div class="t" style="left:309.60px;top:284.60px;letter-spacing:-0.350px;transform:scaleY(1.125);transform-origin:0 10px;">o=sfs</div>
<div class="t" style="left:305.30px;top:303.80px;letter-spacing:-0.217px;transform:scaleY(1.125);transform-origin:0 10px;color:#808080">Ex. ou=users,dc=example,dc=com</div>
<div style="left:518px;top:286px;width:95px;height:39px;background:#d4d0c8;box-shadow:inset -1px -1px #404040,inset 1px 1px #fff,inset -2px -2px #808080"></div>
<svg width="20" height="20" viewBox="0 0 20 20" style="left:526px;top:295px"><path d="M9 8.5 L17.2 18" stroke="#000" stroke-width="4" stroke-linecap="butt"/><path d="M9.2 8.7 L16.8 17.5" stroke="#ffff00" stroke-width="2" stroke-linecap="butt"/><path d="M8.8 11.3 L14.5 17.8" stroke="#000" stroke-width="1.8" stroke-dasharray="1 1"/><path d="M5.5 3.5 L9.8 3.5 L11.5 5 L11.5 7.8 L9.8 9.5 L7.2 11 L4.2 11.3 L2.5 9.8 L2.5 5.2 L4 3.8 Z" fill="#ffff00" stroke="#000" stroke-width="1.1"/><rect x="5" y="5" width="2" height="2" fill="#000"/></svg>
<div class="t" style="left:549.90px;top:294.40px;letter-spacing:-0.087px;transform:scaleY(1.125);transform-origin:0 10px;">Test LDAP</div>
<div class="t" style="left:548.90px;top:307.30px;letter-spacing:0.157px;transform:scaleY(1.125);transform-origin:0 10px;">SearchDN</div>
<div class="t" style="left:230.60px;top:327.80px;letter-spacing:-0.200px;transform:scaleY(1.125);transform-origin:0 10px;">Search Mask:</div>
<div style="left:306px;top:324px;width:197px;height:21px;background:#fff;box-shadow:inset 1px 1px #808080,inset -1px -1px #fff,inset 2px 2px #404040,inset -2px -2px #d4d0c8"></div>
<div class="t" style="left:308.60px;top:327.80px;letter-spacing:-0.268px;transform:scaleY(1.125);transform-origin:0 10px;">(|(sAMAccountName=%0:s)(uid=%0:s)(U</div>
<div style="left:501px;top:324px;width:2px;height:21px;background:#fff;box-shadow:inset -1px 0 #fff,inset 1px 0 #d4d0c8"></div>
<div style="left:503px;top:322px;width:13px;height:25px;background:#d4d0c8"></div>
<div class="t" style="left:249.50px;top:388.10px;letter-spacing:-0.175px;transform:scaleY(1.125);transform-origin:0 10px;">Test Results:</div>
<div style="left:318px;top:385px;width:347px;height:20px;background:#fff;box-shadow:inset 1px 1px #808080,inset -1px -1px #fff,inset 2px 2px #404040,inset -2px -2px #d4d0c8"></div>
<div style="left:12px;top:428px;width:125px;height:38px;background:#d4d0c8;box-shadow:inset -1px -1px #404040,inset 1px 1px #fff,inset -2px -2px #808080"></div>
<div class="t" style="left:40.50px;top:441.20px;letter-spacing:-0.100px;transform:scaleY(1.125);transform-origin:0 10px;">Save Settings</div>
<div style="left:148px;top:427px;width:133px;height:18px;background:#d4d0c8;box-shadow:inset -1px -1px #404040,inset 1px 1px #fff,inset -2px -2px #808080"></div>
<div class="t" style="left:169.90px;top:429.80px;letter-spacing:-0.094px;transform:scaleY(1.125);transform-origin:0 10px;">Create NT Service</div>
<div style="left:148px;top:447px;width:133px;height:18px;background:#d4d0c8;box-shadow:inset -1px -1px #404040,inset 1px 1px #fff,inset -2px -2px #808080"></div>
<div class="t" style="left:174.40px;top:450.10px;letter-spacing:-0.036px;transform:scaleY(1.125);transform-origin:0 10px;">Stop Nonservice</div>
<div class="t" style="left:287.90px;top:433.80px;letter-spacing:-0.208px;transform:scaleY(1.125);transform-origin:0 10px;">Running in standalone mode</div>
<div class="t" style="left:462.60px;top:433.10px;letter-spacing:0.648px;transform:scaleY(1.125);transform-origin:0 10px;filter:url(#crispb);color:#800000;font-weight:bold">Note - You MUST set your local</div>
<div class="t" style="left:444.90px;top:445.40px;letter-spacing:0.534px;transform:scaleY(1.125);transform-origin:0 10px;filter:url(#crispb);color:#800000;font-weight:bold">domain(s) in the Black / White List tab</div>
<div style="left:4px;top:470px;width:678px;height:96px;box-shadow:inset -1px -1px #808080,inset 1px 1px #fff"></div>
<div class="t" style="left:8.50px;top:479.00px;letter-spacing:-0.179px;transform:scaleY(1.125);transform-origin:0 10px;">Current Inbound Connections: 0</div>
<div class="t" style="left:9.50px;top:494.60px;letter-spacing:-0.103px;transform:scaleY(1.125);transform-origin:0 10px;">Total Inbound Connections Served: 45939</div>
<div class="t" style="left:8.50px;top:510.30px;letter-spacing:-0.187px;transform:scaleY(1.125);transform-origin:0 10px;">Current Outbound Connections: 0</div>
<div class="t" style="left:263.90px;top:478.60px;letter-spacing:-0.218px;transform:scaleY(1.125);transform-origin:0 10px;">EMails forwarded: 22191</div>
<div class="t" style="left:263.90px;top:494.50px;letter-spacing:-0.095px;transform:scaleY(1.125);transform-origin:0 10px;">EMails blocked: 12422</div>
<div class="t" style="left:263.90px;top:510.30px;letter-spacing:-0.224px;transform:scaleY(1.125);transform-origin:0 10px;">EMails Attempts: 40301</div>
<div class="t" style="left:7.70px;top:530.60px;letter-spacing:-0.185px;transform:scaleY(1.125);transform-origin:0 10px;color:#000080">Spam Filter v.4.0.0.767 (REGISTERED) by LogSat Software</div>
<div style="left:595px;top:478px;width:85px;height:24px;background:#d4d0c8;box-shadow:inset -1px -1px #404040,inset 1px 1px #fff,inset -2px -2px #808080"></div>
<svg width="16" height="17" viewBox="0 0 16 17" style="left:613.5px;top:482.5px"><circle cx="8" cy="8" r="7.6" fill="#ffff90"/><path d="M5.2 6.2 L5.2 4.8 Q5.6 2.8 8 2.8 Q10.6 2.8 10.8 5 Q10.8 7 8.9 8.2 Q8 8.9 8 10.8" stroke="#ff0000" stroke-width="2.4" fill="none"/><path d="M6.6 14 L8 12.6 L9.4 14 L8 15.4 Z" fill="#ff0000" stroke="#ff0000" stroke-width="1.2"/></svg>
<div class="t" style="left:633.50px;top:485.10px;letter-spacing:-0.020px;transform:scaleY(1.125);transform-origin:0 10px;">Help !</div>
<div class="t" style="left:504.70px;top:519.00px;letter-spacing:-0.146px;transform:scaleY(1.125);transform-origin:0 10px;">Latest build available for download:</div>
<div class="t" style="left:613.40px;top:531.00px;letter-spacing:0.109px;transform:scaleY(1.125);transform-origin:0 10px;color:#800000">v. 3.5.4.718</div>
<div style="left:5px;top:547px;width:500px;height:18px;box-shadow:inset -1px -1px #fff,inset 1px 1px #808080"></div>
<div class="t" style="left:6.30px;top:550.00px;letter-spacing:0.015px;transform:scaleY(1.125);transform-origin:0 10px;">Running since: 1/9/2008 11:55:47 AM</div>
<div style="left:507px;top:547px;width:174px;height:18px;box-shadow:inset -1px -1px #fff,inset 1px 1px #808080"></div>
<div style="left:543px;top:548px;width:137px;height:14px;box-shadow:inset -1px -1px #fff,inset 1px 1px #808080"></div>
</body></html>
